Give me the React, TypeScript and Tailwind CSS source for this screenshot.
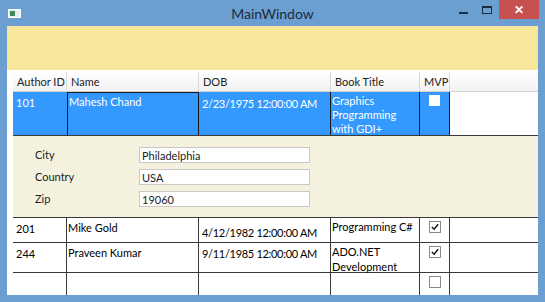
import React from "react";

const font = { fontFamily: 'Lato, "Noto Sans", sans-serif' };

function Check({ checked }: { checked?: boolean }) {
  return (
    <div className="flex h-[12px] w-[12px] items-center justify-center border border-[#8a8a8a] bg-white">
      {checked && (
        <svg width="8" height="8" viewBox="0 0 9 9">
          <path d="M1 4.5 L3.5 7 L8 1.5" fill="none" stroke="#1a1a1a" strokeWidth="1.7" />
        </svg>
      )}
    </div>
  );
}

const cols = ["w-[54px]", "w-[132px]", "w-[132px]", "w-[89px]", "w-[30px]"];

function Row({
  h,
  id,
  name,
  dob,
  dobPad,
  title,
  checked,
}: {
  h: string;
  id?: string;
  name?: string;
  dob?: string;
  dobPad?: string;
  title?: React.ReactNode;
  checked?: boolean;
}) {
  return (
    <div className={`flex ${h} shrink-0 whitespace-nowrap border-b border-[#3a3a3a] text-[11px] leading-[15px] text-black`}>
      <div className={`${cols[0]} shrink-0 border-r border-[#3a3a3a] pl-[3px] pt-[3px]`}>{id}</div>
      <div className={`${cols[1]} shrink-0 border-r border-[#3a3a3a] pl-[1px] pt-[2px]`}>{name}</div>
      <div className={`${cols[2]} shrink-0 border-r border-[#3a3a3a] pl-[3px] tracking-[-0.3px] ${dobPad ?? ""}`}>{dob}</div>
      <div className={`${cols[3]} shrink-0 border-r border-[#3a3a3a] pl-[1px] pt-[1px]`}>{title}</div>
      <div className={`${cols[4]} shrink-0 flex justify-center border-r border-[#3a3a3a] pt-[3px]`}>
        <Check checked={checked} />
      </div>
      <div className="flex-1" />
    </div>
  );
}

export default function App() {
  return (
    <div className="flex h-[302px] w-[545px] flex-col bg-[#6b9fd1]" style={font}>
      <div className="relative flex h-[26px] shrink-0 items-center justify-center">
        <div className="absolute left-[8px] top-[9px] flex h-[9px] w-[13px] border border-white bg-[#e8eef5]">
          <div className="ml-[1px] mt-[1px] h-[5px] w-[5px] bg-[#3c8a5a]" />
        </div>
        <span className="text-[14px] text-[#1c2b3d]">MainWindow</span>
        <div className="absolute right-[77px] top-[12px] h-[2px] w-[9px] bg-[#1c2b3d]" />
        <div className="absolute right-[53px] top-[6px] h-[8px] w-[10px] border border-t-2 border-[#1c2b3d]" />
        <div className="absolute right-[6px] top-0 flex h-[19px] w-[40px] items-center justify-center bg-[#c75050] text-[12px] font-bold text-white">
          ✕
        </div>
      </div>
      <div className="mx-[7px] flex h-[269px] flex-col overflow-hidden bg-white">
        <div className="h-[44px] shrink-0 bg-[#f8e79b]" />
        <div className="flex flex-1 flex-col overflow-hidden pl-[6px] pt-[2px]">
          <div className="flex h-[20px] shrink-0 whitespace-nowrap border-b border-[#d0d0d0] bg-gradient-to-b from-white to-[#f2f2f2] text-[11px] leading-[19px] text-[#222]">
            <div className={`${cols[0]} shrink-0 border-r border-[#d8d8d8] pl-[4px]`}>Author ID</div>
            <div className={`${cols[1]} shrink-0 border-r border-[#d8d8d8] pl-[4px]`}>Name</div>
            <div className={`${cols[2]} shrink-0 border-r border-[#d8d8d8] pl-[4px]`}>DOB</div>
            <div className={`${cols[3]} shrink-0 border-r border-[#d8d8d8] pl-[4px]`}>Book Title</div>
            <div className={`${cols[4]} shrink-0 border-r border-[#d8d8d8] pl-[4px]`}>MVP</div>
            <div className="flex-1" />
          </div>
          <div className="flex h-[44px] shrink-0 whitespace-nowrap border-b border-[#3a3a3a] text-[11px] leading-[15px] text-white">
            <div className={`${cols[0]} shrink-0 bg-[#3399ff] pl-[3px] pt-[3px]`}>101</div>
            <div className={`${cols[1]} shrink-0 border border-b-0 border-[#1a1a1a] bg-[#3399ff] pl-[1px] pt-[1px]`}>Mahesh Chand</div>
            <div className={`${cols[2]} shrink-0 border-r border-[#1a1a1a] bg-[#3399ff] pl-[3px] pt-[4px] tracking-[-0.3px]`}>2/23/1975 12:00:00 AM</div>
            <div className={`${cols[3]} shrink-0 border-r border-[#1a1a1a] bg-[#3399ff] pl-[1px] pt-[2px] leading-[14px]`}>
              Graphics
              <br />
              Programming
              <br />
              with GDI+
            </div>
            <div className={`${cols[4]} shrink-0 flex justify-center border-r border-[#1a1a1a] bg-[#3399ff] pt-[3px]`}>
              <div className="h-[11px] w-[11px] bg-white" />
            </div>
            <div className="flex-1" />
          </div>
          <div className="flex h-[82px] shrink-0 flex-col gap-[6px] border-b border-[#3a3a3a] bg-[#f4f2de] pl-[22px] pt-[11px] text-[11px] text-[#222]">
            {[
              ["City", "Philadelphia"],
              ["Country", "USA"],
              ["Zip", "19060"],
            ].map(([label, value]) => (
              <div key={label} className="flex h-[16px] items-center">
                <div className="w-[104px]">{label}</div>
                <div className="flex h-[16px] w-[171px] items-center border border-[#c8c8c8] bg-white pl-[2px] leading-none">
                  {value}
                </div>
              </div>
            ))}
          </div>
          <Row h="h-[25px]" id="201" name="Mike Gold" dob="4/12/1982 12:00:00 AM" dobPad="pt-[7px]" title="Programming C#" checked />
          <Row
            h="h-[30px]"
            id="244"
            name="Praveen Kumar"
            dob="9/11/1985 12:00:00 AM"
            dobPad="pt-[3px]"
            title={
              <>
                ADO.NET
                <br />
                Development
              </>
            }
            checked
          />
          <Row h="h-[30px]" />
        </div>
      </div>
    </div>
  );
}
